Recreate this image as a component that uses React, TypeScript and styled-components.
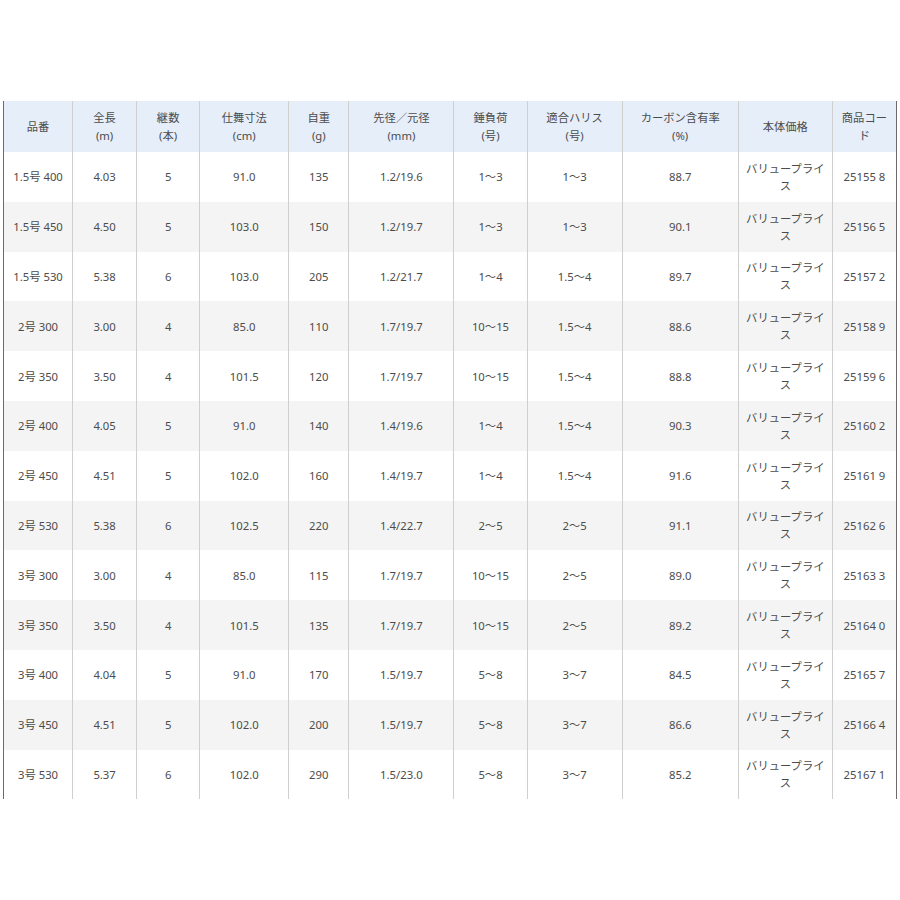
import styled, { createGlobalStyle } from "styled-components";

const GlobalStyle = createGlobalStyle`
  html, body {
    margin: 0;
    padding: 0;
    background: #ffffff;
  }
`;

const Page = styled.div`
  padding: 101px 0 0 3px;
  width: 894px;
`;

const Table = styled.table`
  width: 894px;
  border-collapse: collapse;
  table-layout: fixed;
  border-left: 1px solid #6b6b6b;
  border-right: 1px solid #6b6b6b;
  font-family: "Noto Sans", "Noto Sans CJK JP", sans-serif;
  font-size: 11.3px;
  color: #4c4c4c;
`;

const HeadRow = styled.tr`
  height: 51px;
  background: #e6eefa;
`;

const HeadCell = styled.th<{ $w: number }>`
  box-sizing: border-box;
  width: ${(p) => p.$w}px;
  padding: 0 6px;
  font-weight: normal;
  text-align: center;
  line-height: 18px;
  border-left: 1px solid #cfcfcf;
  &:first-child {
    border-left: none;
  }
`;

const Row = styled.tr<{ $alt: boolean }>`
  height: 49.8px;
  background: ${(p) => (p.$alt ? "#f4f4f4" : "#ffffff")};
`;

const Cell = styled.td`
  box-sizing: border-box;
  padding: 0 6px;
  text-align: center;
  line-height: 17px;
  border-left: 1px solid #cfcfcf;
  &:first-child {
    border-left: none;
  }
`;

// header text, one entry per line
const columns: { lines: string[]; w: number }[] = [
  { lines: ["品番"], w: 69 },
  { lines: ["全長", "(m)"], w: 64 },
  { lines: ["継数", "(本)"], w: 63 },
  { lines: ["仕舞寸法", "(cm)"], w: 89 },
  { lines: ["自重", "(g)"], w: 60 },
  { lines: ["先径／元径", "(mm)"], w: 105 },
  { lines: ["錘負荷", "(号)"], w: 73 },
  { lines: ["適合ハリス", "(号)"], w: 95 },
  { lines: ["カーボン含有率", "(%)"], w: 116 },
  { lines: ["本体価格"], w: 94 },
  { lines: ["商品コー", "ド"], w: 64 },
];

const rows: string[][] = [
  ["1.5号 400", "4.03", "5", "91.0", "135", "1.2/19.6", "1～3", "1～3", "88.7", "25155 8"],
  ["1.5号 450", "4.50", "5", "103.0", "150", "1.2/19.7", "1～3", "1～3", "90.1", "25156 5"],
  ["1.5号 530", "5.38", "6", "103.0", "205", "1.2/21.7", "1～4", "1.5～4", "89.7", "25157 2"],
  ["2号 300", "3.00", "4", "85.0", "110", "1.7/19.7", "10～15", "1.5～4", "88.6", "25158 9"],
  ["2号 350", "3.50", "4", "101.5", "120", "1.7/19.7", "10～15", "1.5～4", "88.8", "25159 6"],
  ["2号 400", "4.05", "5", "91.0", "140", "1.4/19.6", "1～4", "1.5～4", "90.3", "25160 2"],
  ["2号 450", "4.51", "5", "102.0", "160", "1.4/19.7", "1～4", "1.5～4", "91.6", "25161 9"],
  ["2号 530", "5.38", "6", "102.5", "220", "1.4/22.7", "2～5", "2～5", "91.1", "25162 6"],
  ["3号 300", "3.00", "4", "85.0", "115", "1.7/19.7", "10～15", "2～5", "89.0", "25163 3"],
  ["3号 350", "3.50", "4", "101.5", "135", "1.7/19.7", "10～15", "2～5", "89.2", "25164 0"],
  ["3号 400", "4.04", "5", "91.0", "170", "1.5/19.7", "5～8", "3～7", "84.5", "25165 7"],
  ["3号 450", "4.51", "5", "102.0", "200", "1.5/19.7", "5～8", "3～7", "86.6", "25166 4"],
  ["3号 530", "5.37", "6", "102.0", "290", "1.5/23.0", "5～8", "3～7", "85.2", "25167 1"],
];

export default function App() {
  return (
    <>
      <GlobalStyle />
      <Page>
        <Table>
          <thead>
            <HeadRow>
              {columns.map((c) => (
                <HeadCell key={c.lines[0]} $w={c.w}>
                  {c.lines.map((l, k) => (
                    <span key={l}>
                      {k > 0 && <br />}
                      {l}
                    </span>
                  ))}
                </HeadCell>
              ))}
            </HeadRow>
          </thead>
          <tbody>
            {rows.map((r, i) => (
              <Row key={r[0]} $alt={i % 2 === 1}>
                {r.slice(0, 9).map((v, j) => (
                  <Cell key={j}>{v}</Cell>
                ))}
                <Cell>バリュープライス</Cell>
                <Cell>{r[9]}</Cell>
              </Row>
            ))}
          </tbody>
        </Table>
      </Page>
    </>
  );
}
